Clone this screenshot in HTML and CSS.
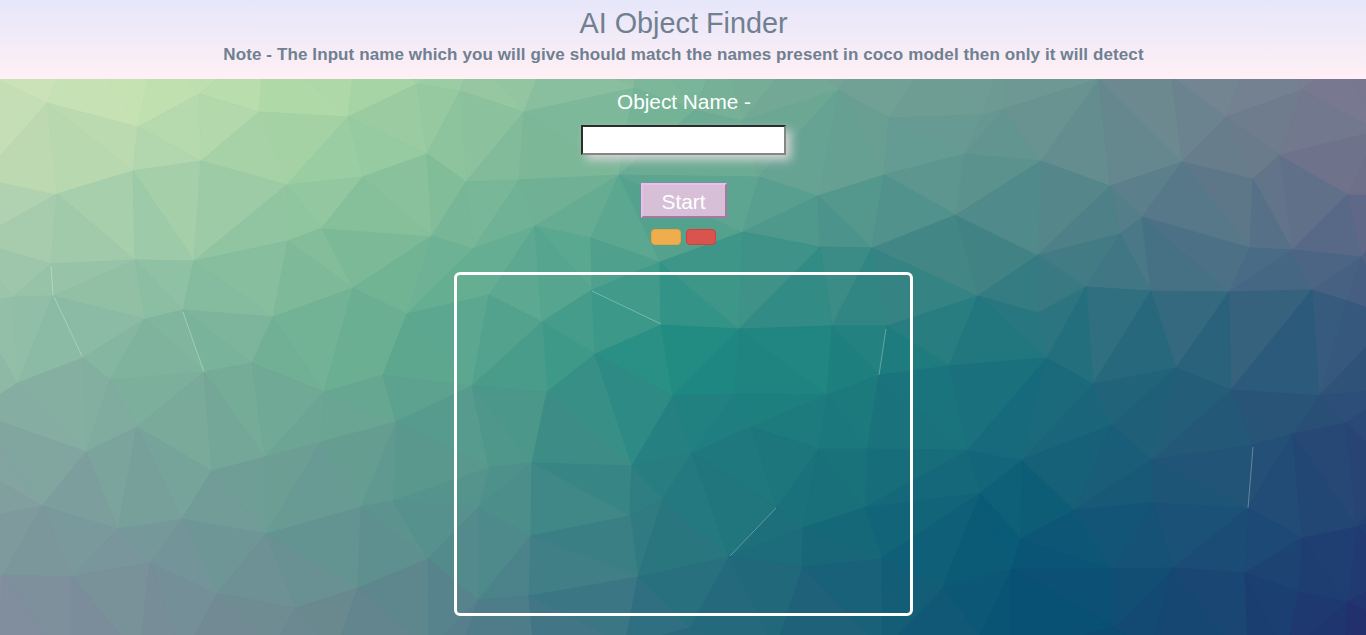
FILE: index.html
```html
<!DOCTYPE html>
<html lang="en">
<head>
<meta charset="utf-8">
<title>AI Object Finder</title>
<link rel="stylesheet" href="styles.css">
</head>
<body>
<svg class="backdrop" viewBox="0 0 1366 635" preserveAspectRatio="none" aria-hidden="true"></svg>
<div class="page">
  <header class="header">
    <h1 class="title">AI Object Finder</h1>
    <p class="note">Note - The Input name which you will give should match the names present in coco model then only it will detect</p>
  </header>
  <main class="main">
    <label class="label" for="object-name">Object Name -</label>
    <input class="field" id="object-name" type="text">
    <button class="start" type="button">Start</button>
    <div class="status">
      <span class="pill pill-warning"></span>
      <span class="pill pill-danger"></span>
    </div>
    <div class="canvas"></div>
  </main>
</div>
<script src="mesh.js"></script>
</body>
</html>
```
FILE: styles.css
```css
* { box-sizing: border-box; }
html, body { height: 100%; }
body {
  margin: 0;
  overflow: hidden;
  font-family: "Liberation Sans", Arial, sans-serif;
  background: #4a9488;
}
.backdrop {
  position: absolute;
  inset: 0;
  width: 100%;
  height: 100%;
}
.hairline { stroke: #fff; stroke-opacity: .3; stroke-width: 1; }
.page { position: relative; }
.header {
  height: 79px;
  padding: 6px 0 0 1px;
  text-align: center;
  color: slategray;
  background: linear-gradient(#e6e6fa, #fff0f5);
}
.title {
  margin: 0;
  font-size: 28.8px;
  font-weight: 400;
  line-height: 34px;
}
.note {
  margin: 5px 0 0;
  font-size: 17px;
  font-weight: 700;
  letter-spacing: .105px;
  line-height: 20px;
  white-space: nowrap;
}
.main {
  display: flex;
  flex-direction: column;
  align-items: center;
}
.label {
  margin-top: 11px;
  padding-left: 2px;
  font-size: 20.8px;
  line-height: 24px;
  color: #fff;
}
.field {
  width: 205px;
  height: 30px;
  margin-top: 11px;
  padding: 1px 2px;
  border: 2px solid;
  border-color: #2c2c2c #858585 #858585 #2c2c2c;
  background: #fff;
  box-shadow: 5px 5px 10px lightgray;
}
.start {
  width: 86px;
  height: 35px;
  margin: 28px 0 0 1px;
  padding: 2px 0 0;
  border: 2px solid;
  border-color: #f5b8f5 #a379a3 #a379a3 #f5b8f5;
  background: thistle;
  color: #fff;
  font-family: inherit;
  font-size: 20.8px;
  line-height: 24px;
}
.status {
  display: flex;
  gap: 5px;
  margin-top: 11px;
}
.pill {
  width: 30px;
  height: 16px;
  border: 1px solid;
  border-radius: 4px;
}
.pill-warning { background: #f0ad4e; border-color: #eea236; }
.pill-danger { background: #d9534f; border-color: #d43f3a; }
.canvas {
  width: 459px;
  height: 344px;
  margin-top: 27px;
  border: 3px solid #fff;
  border-radius: 6px;
}
```
FILE: mesh.js
```js
// Low-poly backdrop: triangulates the points and fills each facet
// with the gradient colour found at its centre.
const points = [
  [-50,57],[78,33],[155,47],[265,41],[358,35],[472,55],[548,50],[640,45],[720,45],[800,50],[870,45],[935,50],[1008,40],[1172,77],[1250,50],[1290,55],[1340,60],[1400,95],
  [-19,178],[-27,241],[-27,305],[-28,412],[-37,460],[-40,522],[-40,610],
  [47,103],[138,127],[199,94],[259,112],[348,117],[133,171],[201,161],[287,185],[57,194],[135,260],[194,261],[322,228],[288,241],[51,264],[53,296],[13,297],[145,319],[183,310],[273,317],[353,288],
  [417,84],[460,91],[524,112],[427,154],[363,177],[466,182],[519,180],[619,175],[535,226],[432,236],[473,249],[591,238],[660,262],[407,314],[489,295],[542,322],[592,290],[661,325],[595,354],
  [634,88],[695,110],[742,121],[838,90],[889,118],[982,115],[1004,109],[965,154],[884,175],[818,196],[759,177],[743,232],[820,247],[872,248],[956,215],[978,296],[739,329],[832,326],[887,326],
  [1099,79],[1041,161],[1110,186],[1182,162],[1226,117],[1302,90],[1280,155],[1253,179],[1348,194],[1142,217],[1120,234],[1038,255],[1250,248],[1292,250],[1086,287],[1151,291],[1229,292],[1312,290],[1362,257],[1038,313],[1347,301],[1378,131],[1405,194],[1395,318],
  [83,358],[18,383],[110,380],[204,372],[252,363],[324,392],[137,427],[86,452],[212,471],[265,457],[321,442],[42,506],[118,529],[182,519],[266,534],[3,575],[72,577],[150,563],[217,594],[296,608],
  [72,670],[139,658],[183,658],[274,645],[335,655],[0,690],
  [383,375],[396,422],[472,386],[547,392],[673,396],[489,468],[532,463],[632,466],[361,507],[393,501],[478,508],[531,536],[630,516],[663,499],[428,559],[358,588],[478,600],[529,596],[638,577],
  [429,650],[458,660],[534,650],[625,645],[690,628],[775,649],[883,650],[980,636],
  [735,394],[827,395],[879,375],[949,366],[692,453],[751,427],[819,449],[867,449],[968,450],[777,507],[864,508],[981,493],[803,528],[729,557],[802,566],[882,558],[943,587],[1012,569],[1021,538],[1022,460],
  [1047,358],[1093,384],[1176,368],[1231,390],[1319,396],[1112,425],[1152,460],[1075,510],[1153,503],[1293,434],[1346,423],[1253,445],[1248,508],[1302,538],[1357,527],[1114,569],[1173,568],[1245,573],[1299,592],[1348,602],[1115,627],
  [1011,655],[1150,655],[1249,665],[1286,655],[1345,665],[1400,388],[1400,470],[1395,516],[1410,570],[1400,625]
];

// Colour grid: 9 columns across 0..1366, 7 rows across 80..632.
const palette = [
  [[204,225,184],[195,226,176],[172,215,166],[147,197,161],[120,181,153],[114,162,149],[110,153,147],[114,135,144],[123,120,145]],
  [[188,216,178],[172,211,171],[150,203,160],[125,184,152],[104,171,147],[98,159,146],[93,144,142],[98,125,139],[110,112,138]],
  [[158,199,172],[146,196,165],[125,186,151],[98,172,146],[66,154,138],[62,139,134],[62,127,132],[72,112,133],[78,98,132]],
  [[143,187,167],[125,178,157],[108,176,146],[76,158,139],[32,140,131],[30,128,127],[28,114,125],[40,98,122],[48,84,122]],
  [[132,166,161],[121,168,154],[105,160,146],[76,148,138],[32,124,127],[26,117,123],[20,102,122],[34,88,118],[42,70,117]],
  [[126,153,157],[116,152,154],[99,148,145],[76,138,138],[40,118,127],[20,102,120],[8,88,118],[26,80,118],[32,62,116]],
  [[130,142,158],[118,140,150],[105,135,142],[76,122,137],[42,106,127],[28,94,120],[6,80,116],[22,70,114],[34,48,110]]
];

const hairlines = [
  [51,266,53,295],[54,297,82,356],[183,312,204,372],[592,291,661,324],
  [886,329,879,375],[776,508,730,556],[1253,447,1248,508]
];

function colourAt(x, y) {
  const u = Math.min(7.999, Math.max(0, x / 1366 * 8));
  const v = Math.min(5.999, Math.max(0, (y - 80) / 92));
  const i = Math.floor(u), j = Math.floor(v), a = u - i, b = v - j;
  const c = [0, 1, 2].map(k => Math.round(
    (palette[j][i][k] * (1 - a) + palette[j][i + 1][k] * a) * (1 - b) +
    (palette[j + 1][i][k] * (1 - a) + palette[j + 1][i + 1][k] * a) * b));
  return `rgb(${c.join(",")})`;
}

function circle(pts, t) {
  const [ax, ay] = pts[t[0]], [bx, by] = pts[t[1]], [cx, cy] = pts[t[2]];
  const d = 2 * (ax * (by - cy) + bx * (cy - ay) + cx * (ay - by));
  const a = ax * ax + ay * ay, b = bx * bx + by * by, c = cx * cx + cy * cy;
  const x = (a * (by - cy) + b * (cy - ay) + c * (ay - by)) / d;
  const y = (a * (cx - bx) + b * (ax - cx) + c * (bx - ax)) / d;
  return { t, x, y, r: (ax - x) ** 2 + (ay - y) ** 2 };
}

function triangulate(source) {
  const n = source.length;
  const pts = source.concat([[-9000, -8000], [11000, -8100], [700, 14000]]);
  let tris = [circle(pts, [n, n + 1, n + 2])];
  for (let p = 0; p < n; p++) {
    const [px, py] = pts[p], edges = new Map(), keep = [];
    for (const tri of tris) {
      if ((px - tri.x) ** 2 + (py - tri.y) ** 2 >= tri.r) { keep.push(tri); continue; }
      for (let k = 0; k < 3; k++) {
        const e = [tri.t[k], tri.t[(k + 1) % 3]].sort((m, o) => m - o);
        const key = e.join();
        if (edges.has(key)) edges.delete(key); else edges.set(key, e);
      }
    }
    for (const e of edges.values()) keep.push(circle(pts, [e[0], e[1], p]));
    tris = keep;
  }
  return tris.map(o => o.t).filter(t => t.every(k => k < n));
}

const svg = document.querySelector(".backdrop");
let markup = "";
for (const t of triangulate(points)) {
  const v = t.map(k => points[k]);
  const fill = colourAt((v[0][0] + v[1][0] + v[2][0]) / 3, (v[0][1] + v[1][1] + v[2][1]) / 3);
  markup += `<polygon points="${v.join(" ")}" fill="${fill}" stroke="${fill}" stroke-width="1"/>`;
}
for (const [a, b, c, d] of hairlines) {
  markup += `<line class="hairline" x1="${a}" y1="${b}" x2="${c}" y2="${d}"/>`;
}
svg.innerHTML = markup;
```
